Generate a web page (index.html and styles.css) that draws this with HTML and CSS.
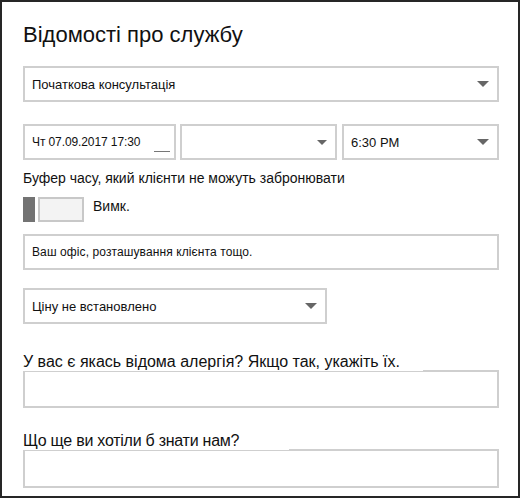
FILE: index.html
```html
<!DOCTYPE html>
<html lang="uk">
<head>
<meta charset="utf-8">
<link rel="stylesheet" href="styles.css">
</head>
<body>
<div class="panel">
  <h1 class="title">Відомості про службу</h1>

  <div class="field select full">
    <span class="value">Початкова консультація</span>
    <svg class="arrow" width="12" height="6" viewBox="0 0 12 6"><path d="M0 0H12L6 6Z" fill="#666"/></svg>
  </div>

  <div class="row">
    <div class="field date">
      <span class="value small">Чт 07.09.2017 17:30</span>
      <span class="dash"></span>
    </div>
    <div class="field select mid">
      <span class="value"></span>
      <svg class="arrow" width="10" height="5" viewBox="0 0 12 6"><path d="M0 0H12L6 6Z" fill="#666"/></svg>
    </div>
    <div class="field select mid">
      <span class="value">6:30 PM</span>
      <svg class="arrow" width="12" height="6" viewBox="0 0 12 6"><path d="M0 0H12L6 6Z" fill="#666"/></svg>
    </div>
  </div>

  <div class="buffer">Буфер часу, який клієнти не можуть забронювати</div>

  <div class="toggle">
    <span class="knob"></span>
    <span class="track"></span>
    <span class="toggle-label">Вимк.</span>
  </div>

  <div class="field full location">
    <span class="value loc">Ваш офіс, розташування клієнта тощо.</span>
  </div>

  <div class="field select price">
    <span class="value">Ціну не встановлено</span>
    <svg class="arrow" width="12" height="6" viewBox="0 0 12 6"><path d="M0 0H12L6 6Z" fill="#666"/></svg>
  </div>

  <div class="question q1">У вас є якась відома алергія? Якщо так, укажіть їх.</div>
  <div class="field full area a1"></div>

  <div class="question q2">Що ще ви хотіли б знати нам?</div>
  <div class="field full area a2"></div>
</div>
</body>
</html>
```

FILE: styles.css
```css
* { box-sizing: border-box; }
html, body { margin: 0; padding: 0; background: #fff; }
body {
  font-family: "Liberation Sans", Arial, sans-serif;
  color: #111;
}
.panel {
  width: 520px;
  height: 498px;
  border: 2px solid #262626;
  padding: 0 19px 0 21px;
  display: flex;
  flex-direction: column;
  align-items: flex-start;
}
.title {
  margin: 20px 0 0 0;
  font-size: 22px;
  line-height: 26px;
  font-weight: normal;
  color: #111;
}
.field {
  height: 36px;
  border: 2px solid #cfcfcf;
  background: #fff;
  display: flex;
  align-items: center;
  padding: 0 8px 0 7px;
  flex: none;
}
.full { width: 476px; }
.select { justify-content: space-between; }
.value {
  font-size: 13px;
  color: #111;
  white-space: nowrap;
}
.value.small { font-size: 12px; letter-spacing: -0.1px; }
.value.loc { font-size: 12px; letter-spacing: 0.1px; }
.arrow { flex: none; }
.field.full.select { margin-top: 18px; }

.row {
  margin-top: 22px;
  display: flex;
  gap: 4px;
  width: 476px;
}
.date { width: 153px; position: relative; }
.mid { width: 157px; }
.row .mid + .mid { margin-left: 1px; }
.dash {
  position: absolute;
  left: 129px;
  bottom: 6px;
  width: 16px;
  height: 1px;
  background: #777;
}
.buffer {
  margin-top: 10px;
  font-size: 14px;
  line-height: 17px;
}
.toggle {
  margin-top: 10px;
  display: flex;
  align-items: flex-start;
  height: 25px;
}
.knob {
  width: 12px;
  height: 25px;
  background: #737373;
}
.track {
  width: 46px;
  height: 25px;
  margin-left: 3px;
  border: 2px solid #c8c8c8;
  background: #f3f3f3;
}
.toggle-label {
  margin-left: 9px;
  margin-top: 1px;
  font-size: 14px;
  line-height: 17px;
}
.location { margin-top: 12px; }
.price { margin-top: 18px; width: 304px; }
.question {
  font-size: 16px;
  line-height: 18px;
  background: #fff;
  position: relative;
  z-index: 1;
}
.q1 { margin-top: 29px; padding-right: 23px; }
.q2 { margin-top: 24px; padding-right: 50px; letter-spacing: -0.25px; }
.area { height: 38px; margin-top: 0; }
.a2 { height: 39px; }
.q1 + .area, .q2 + .area { margin-top: -1px; }
```
